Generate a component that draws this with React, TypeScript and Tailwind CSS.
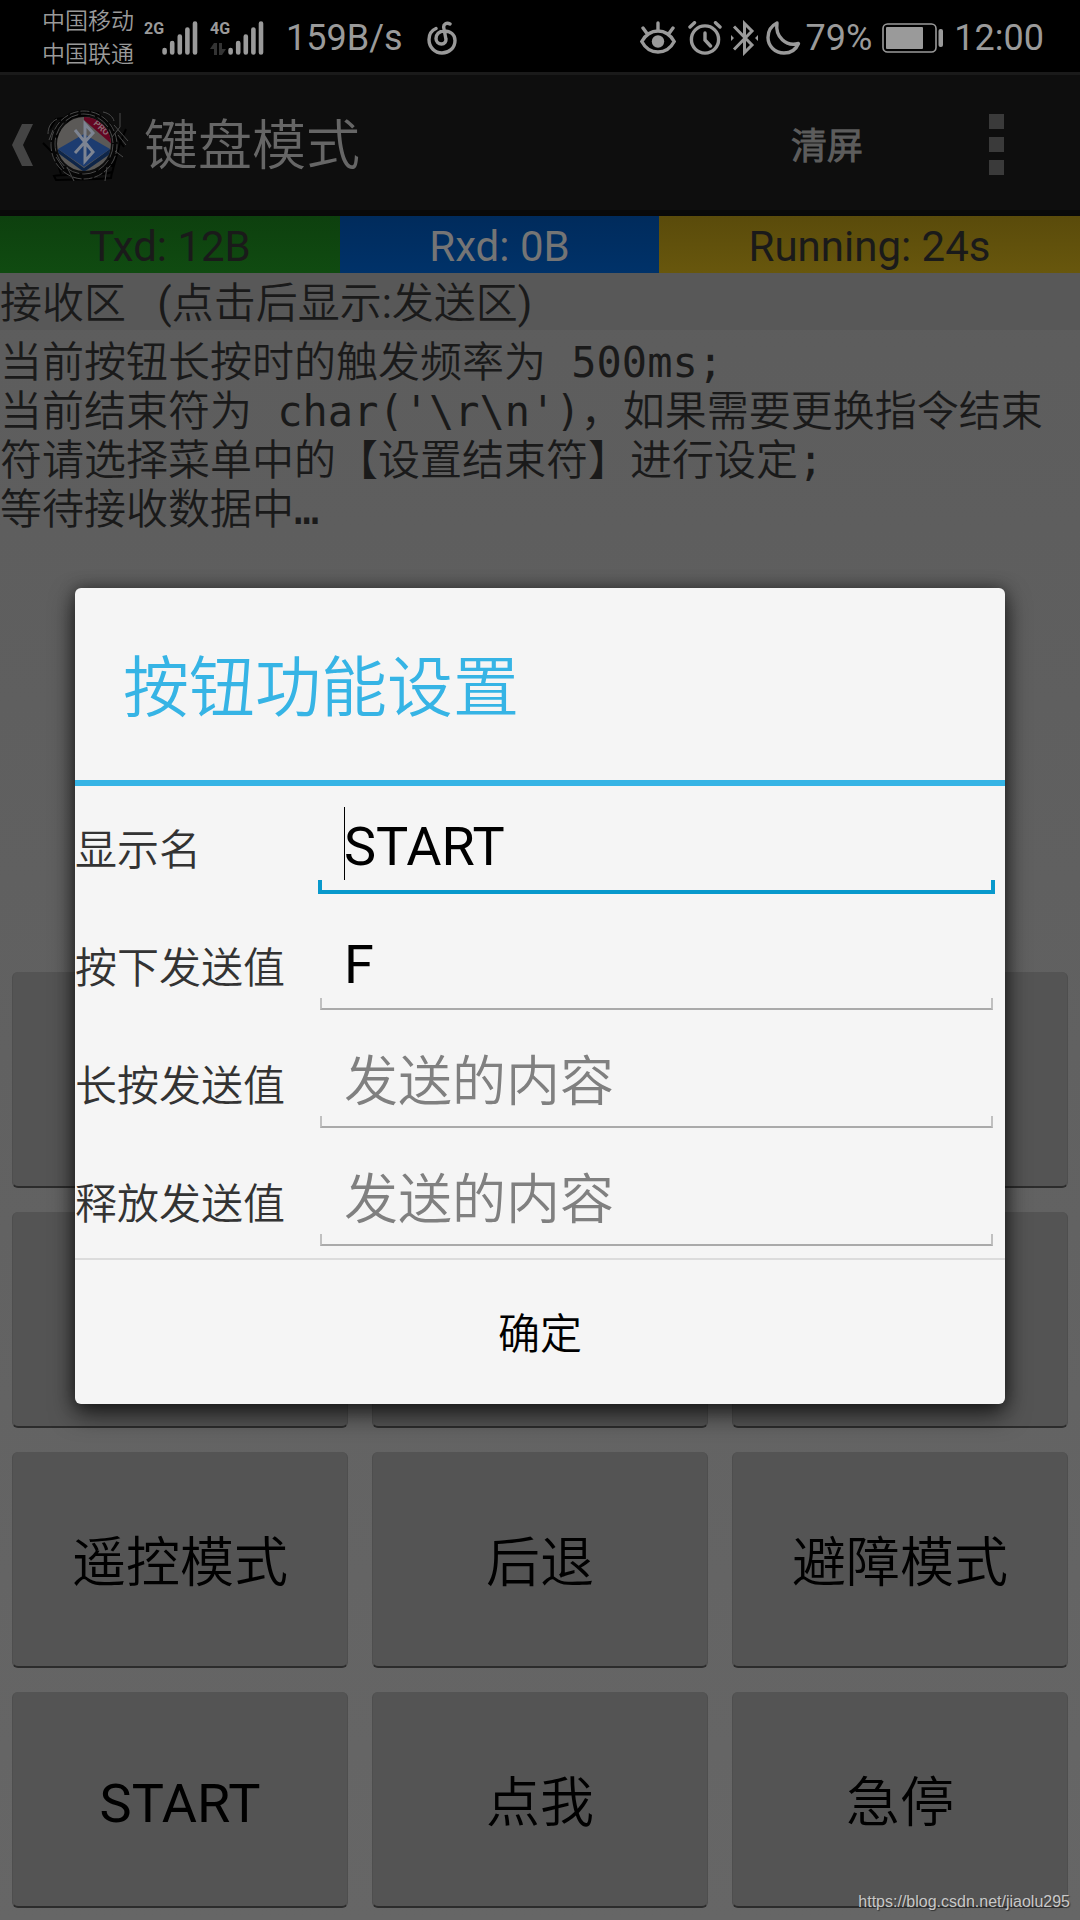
const UI_FONT = "font-['Roboto','Noto_Sans_CJK_SC_DemiLight','Noto_Sans_CJK_SC_Light','Noto_Sans_CJK_SC',sans-serif]";
const MONO_FONT = "font-['DejaVu_Sans_Mono','Noto_Sans_CJK_SC_DemiLight','Noto_Sans_CJK_SC_Light','Noto_Sans_CJK_SC',monospace]";

const LOG_LINES = [
  '当前按钮长按时的触发频率为 500ms;',
  "当前结束符为 char('\\r\\n')，如果需要更换指令结束符请选择菜单中的【设置结束符】进行设定;",
  '等待接收数据中…',
];

// The first two rows have no caption yet
const KEYS = ['', '', '', '', '', '', '遥控模式', '后退', '避障模式', 'START', '点我', '急停'];

interface FieldProps {
  id: string;
  label: string;
  value?: string;
  placeholder?: string;
  isFocused?: boolean;
}

function SignalBars() {
  return (
    <svg width="36" height="34" viewBox="0 0 36 34" fill="none" stroke="currentColor" strokeWidth="4.6" strokeLinecap="round">
      <path d="M2.6 29v2.4M10.2 22v9.4M17.8 15.500v15.900M25.400 8.500v22.900M33 2.600v28.800" />
    </svg>
  );
}

function StatusBar() {
  return (
    <div className="flex h-[72px] items-center justify-between bg-black pt-1 pr-9 pl-[42px] text-4xl text-[#9a9a9a]">
      <div className="flex items-center">
        <div className="w-[98px] text-[23px] leading-[33px]">
          <div>中国移动</div>
          <div>中国联通</div>
        </div>
        <div className="flex">
          <span className="w-[22px] pl-1 font-['Liberation_Sans_Narrow',Roboto,sans-serif] text-base leading-4 font-bold">2G</span>
          <SignalBars />
        </div>
        <div className="ml-2 flex">
          <div className="flex w-[22px] flex-col justify-between pl-1">
            <span className="font-['Liberation_Sans_Narrow',Roboto,sans-serif] text-base leading-4 font-bold">4G</span>
            <svg width="16" height="12" viewBox="0 0 16 12" fill="#333">
              <path d="M4 0h3v12H4V6H0zM9 0h3v6h4l-4 6H9z" />
            </svg>
          </div>
          <SignalBars />
        </div>
        <span className="ml-[22px]">159B/s</span>
        <svg className="ml-6" width="30" height="34" viewBox="0 0 30 34" fill="none" stroke="currentColor" strokeWidth="3.400" strokeLinecap="round">
          <path d="M9 7.500C4.500 9.500 2 13.500 2 18.500 2 26.500 8 32 15 32s13-5 13-12.500c0-6-4.500-9.500-11-9.500-5 0-8 3.500-8 7.500 0 3.500 2.500 5.500 5.500 5.500s5-2.500 4.300-5.500L16.800 7c-.8-3.500 2.700-6 6.200-4" />
        </svg>
      </div>
      <div className="flex items-center">
        <svg width="36" height="34" viewBox="0 0 36 34" fill="none" stroke="currentColor" strokeWidth="3.400" strokeLinecap="round">
          <path d="M1.800 20.500C5.500 14 11 10 18 10s12.500 4 16.200 10.500C30.500 27.500 25 31 18 31S5.500 27.500 1.800 20.500zM18 2v7M3 7l4 5.500M33 7l-4 5.500" />
          <circle cx="18" cy="20.500" r="6.200" fill="currentColor" stroke="none" />
        </svg>
        <svg className="ml-3" width="34" height="34" viewBox="0 0 34 34" fill="none" stroke="currentColor" strokeWidth="3.400" strokeLinecap="round">
          <circle cx="17" cy="18.500" r="13.600" />
          <path d="M17 12v7l5.500 6M2 6l4.500-4.300M32 6l-4.500-4.300" />
        </svg>
        <svg className="ml-2" width="28" height="36" viewBox="0 0 28 36" fill="none" stroke="currentColor" strokeWidth="3">
          <path d="M4 6.500 22 25l-7.500 7.500v-29L22 11 4 29.500" />
          <path d="m1 15 3 3-3 3M28 15l-3 3 3 3" fill="currentColor" stroke="none" />
        </svg>
        <svg className="ml-2" width="36" height="34" viewBox="0 0 36 34" fill="none" stroke="currentColor" strokeWidth="3.400" strokeLinejoin="round">
          <path d="M11 2C5 5 2 10.500 2 16.500 2 25 9 32 18 32c6.500 0 12-3.500 14.500-9.500C20 26 9 16 11 2z" />
        </svg>
        <span className="ml-1">79%</span>
        <svg className="ml-[10px]" width="62" height="30" viewBox="0 0 62 30" fill="currentColor">
          <rect x="1" y="1" width="53" height="28" rx="4.500" fill="none" stroke="currentColor" strokeWidth="1.600" />
          <rect x="4" y="4" width="37" height="22" rx="1" />
          <rect x="56.500" y="6" width="4.500" height="18" rx="2" />
        </svg>
        <span className="ml-[10px]">12:00</span>
      </div>
    </div>
  );
}

function AppLogo() {
  return (
    <svg width="88" height="76" viewBox="0 0 88 76" fill="none">
      <defs>
        <clipPath id="logo-disc">
          <circle cx="42" cy="37" r="27" />
        </clipPath>
      </defs>
      {/* Scribbled frame */}
      <g stroke="#000" strokeWidth="2">
        <path d="M1 36l12 12 6 19M14 31 30 10l26-4 18 22-4 32M12 69c14-3 42 2 58-4l-1 6c-18 2-38 1-55 2zM70 66l8-30 6-14M68 20l14 20M8 22l6-10 8-1" />
        <ellipse cx="42" cy="37" rx="31" ry="32" stroke="#060606" strokeWidth="5" />
      </g>
      <g stroke="#4a4a4a" strokeWidth="1">
        <ellipse cx="42" cy="38" rx="33" ry="34" strokeDasharray="9 2" />
        <ellipse cx="42" cy="37" rx="29" ry="30" strokeDasharray="14 3" />
        <path d="M6 27c0-7 3-12 9-15M7 33l4-10M61 5c6 1 10 5 11 9M78 6v14l-8 10M72 18l14 16M76 28l8 10M73 44l8 6M25 60l7 14M65 60l-2 14M14 50l8 12" />
      </g>
      <g clipPath="url(#logo-disc)">
        <path fill="#5b5957" d="M15 10h54v54H15z" />
        <path fill="#0e2548" d="M16 42l26 19 26-19v5L42 65 16 46z" />
        <path fill="#1d3c70" d="M16 42l26-15 26 15-26 18z" />
        <path fill="#640521" d="M42 5h30v34L42 13z" />
        <text x="51" y="17" transform="rotate(42 51 17)" fill="#8c6b72" className="font-['Roboto',sans-serif] text-[9px] font-bold">PRO</text>
      </g>
      <path stroke="#7d8492" strokeWidth="3" d="M33 23l18 22-8 9V17l8 9-18 20" />
    </svg>
  );
}

function ActionBar() {
  return (
    <header className="flex h-36 items-center border-t-[3px] border-b-[6px] border-t-[#1a1a1a] border-b-[#090909] bg-[#0e0e0e] pt-1 text-[#666]">
      <button type="button" aria-label="返回" className="flex items-center pl-3">
        <svg width="22" height="42" viewBox="0 0 22 42" fill="#444">
          <path d="M10 0h11L11 21l10 21H10L0 21z" />
        </svg>
        <span className="ml-2">
          <AppLogo />
        </span>
      </button>
      <h1 className="ml-[14px] flex-1 pt-1 text-[54px] leading-[64px]">键盘模式</h1>
      <button type="button" className="pt-1 text-4xl font-bold text-[#5c5c5c]">清屏</button>
      <button type="button" aria-label="菜单" className="ml-[126px] mr-[76px] flex flex-col gap-2">
        <span className="size-[15px] bg-[#3a3a3a]" />
        <span className="size-[15px] bg-[#3a3a3a]" />
        <span className="size-[15px] bg-[#3a3a3a]" />
      </button>
    </header>
  );
}

function Field({ id, label, value, placeholder, isFocused }: FieldProps) {
  return (
    <div className="flex h-[118px] items-baseline">
      <label htmlFor={id} className="w-[233px] text-[42px] leading-[48px] text-[#333]">{label}</label>
      <div className="relative h-full flex-1">
        <input
          id={id}
          type="text"
          defaultValue={value}
          placeholder={placeholder}
          className="block h-full w-full bg-transparent pt-[2px] pr-9 pl-9 text-[54px] text-black outline-none placeholder:text-[#808080]"
        />
        {isFocused && <span className="absolute top-[21px] left-9 h-[73px] w-px bg-black" />}
        <span
          className={
            isFocused
              ? 'pointer-events-none absolute inset-x-[10px] bottom-[10px] h-[14px] border-4 border-t-0 border-[#0899cc]'
              : 'pointer-events-none absolute inset-x-3 bottom-3 h-3 border-2 border-t-0 border-x-[#c0c0c0] border-b-[#aaa]'
          }
        />
      </div>
    </div>
  );
}

function SettingsDialog() {
  return (
    <div className="absolute inset-x-0 top-[72px] bottom-0 flex items-center px-[75px]">
      <form
        role="dialog"
        aria-labelledby="dialog-title"
        className="w-full rounded-md bg-[#f5f5f5] shadow-[0_10px_24px_rgba(0,0,0,0.65),0_0_16px_rgba(0,0,0,0.4)]"
      >
        <h2 id="dialog-title" className="flex h-[198px] items-center border-b-[6px] border-[#36b4e5] pt-2 pl-12 text-[66px] text-[#36b4e5]">
          按钮功能设置
        </h2>
        <Field id="name" label="显示名" value="START" isFocused />
        <Field id="press" label="按下发送值" value="F" />
        <Field id="hold" label="长按发送值" placeholder="发送的内容" />
        <Field id="release" label="释放发送值" placeholder="发送的内容" />
        <button type="button" className="h-[146px] w-full rounded-b-md border-t-2 border-[#dcdcdc] pt-1 text-[42px] text-black">
          确定
        </button>
      </form>
    </div>
  );
}

export default function App() {
  return (
    <div className={`relative flex min-h-screen flex-col bg-linear-to-b from-[#5b5b5b] to-[#666] ${UI_FONT}`}>
      <StatusBar />
      <ActionBar />

      {/* Traffic counters */}
      <div className="grid grid-cols-[340fr_319fr_421fr] text-center text-[42px] leading-[53px] text-[#1a1a1a]">
        <div className="bg-linear-to-b from-[#0d400e] to-[#104b11] pt-1">Txd: 12B</div>
        <div className="bg-linear-to-b from-[#002b5c] to-[#003269] pt-1 text-[#757575]">Rxd: 0B</div>
        <div className="bg-linear-to-b from-[#5a4b0b] to-[#68570d] pt-1">Running: 24s</div>
      </div>

      <button type="button" className="bg-[#585858] pt-1 text-left text-[42px] leading-[53px] whitespace-pre text-[#1a1a1a]">
        接收区   (点击后显示:发送区)
      </button>

      <div className={`flex-1 pt-2 text-[42px] leading-[49px] text-[#1a1a1a] ${MONO_FONT}`}>
        {LOG_LINES.map((line) => (
          <p key={line}>{line}</p>
        ))}
      </div>

      <div className="grid grid-cols-3 gap-6 p-3 text-[54px] text-black">
        {KEYS.map((name, i) => (
          <button
            key={i}
            type="button"
            className="h-[216px] rounded-md border-x border-b-2 border-x-[#4e4e4e] border-b-[#2c2c2c] bg-[#545454] pt-2"
          >
            {name}
          </button>
        ))}
      </div>

      <SettingsDialog />

      <a
        href="https://blog.csdn.net/jiaolu295"
        className="absolute right-[10px] bottom-[6px] font-['Liberation_Sans',sans-serif] text-base leading-6 text-[#c8c8c8] [text-shadow:1px_1px_1px_#333]"
      >
        https://blog.csdn.net/jiaolu295
      </a>
    </div>
  );
}
